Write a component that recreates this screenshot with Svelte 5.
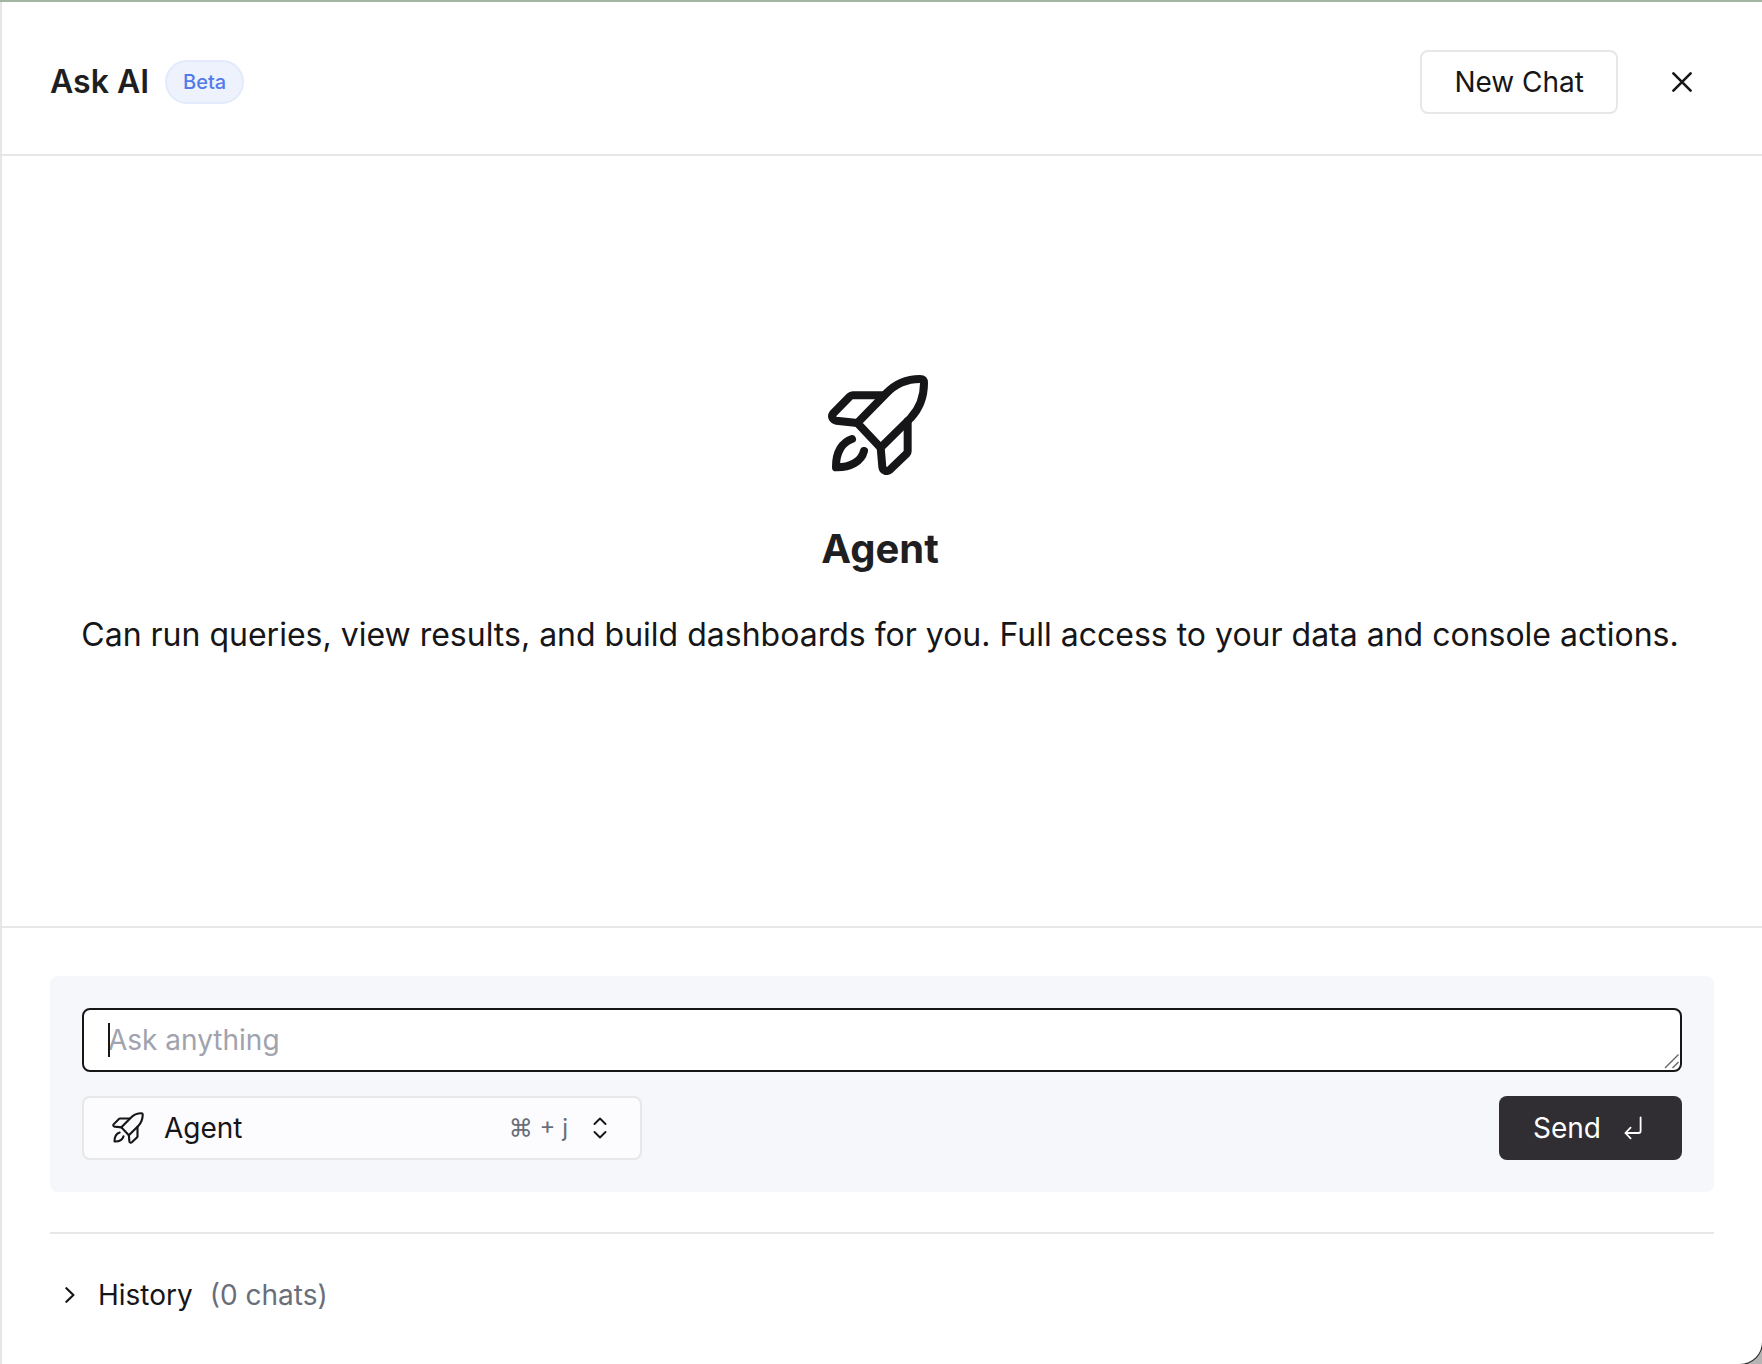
<script>
  let mode = $state('agent');
  let question = $state('');
</script>

{#snippet rocket(weight)}
  <svg class="rocket" viewBox="84 74 300 300" fill="none" stroke="currentColor" stroke-width={weight} stroke-linecap="round" stroke-linejoin="round" aria-hidden="true">
    <path d="M172 218 L258 130 C288 98 322 86 360 86 Q372 86 372 98 C372 140 358 175 332 203 L242 292 Z" />
    <path d="M248 135 H158 Q153 135 149 139 L99 190 Q94 197 98 204 Q102 210 109 211 L172 218" />
    <path d="M323 213 V303 Q323 307 320 310 L270 358 Q263 364 255 361 Q248 358 247 350 L242 292" />
    <path d="M156 266 C128 275 107 304 108 351 C150 352 184 334 192 302" />
  </svg>
{/snippet}

<main class="panel">
  <header class="header">
    <h1>Ask AI</h1>
    <span class="badge">Beta</span>
    <button class="new-chat" type="button">New Chat</button>
    <button class="close" type="button" aria-label="Close">
      <svg viewBox="0 0 20 20" fill="none" stroke="currentColor" stroke-width="2.6" stroke-linecap="round" aria-hidden="true">
        <path d="M1.4 1.4 L18.6 18.6 M18.6 1.4 L1.4 18.6" />
      </svg>
    </button>
  </header>

  <section class="intro">
    {@render rocket(24)}
    <h2>Agent</h2>
    <p>Can run queries, view results, and build dashboards for you. Full access to your data and console actions.</p>
  </section>

  <footer class="footer">
    <form class="composer" onsubmit={(event) => event.preventDefault()}>
      <div class="prompt">
        <textarea rows="1" placeholder="Ask anything" aria-label="Ask anything" bind:value={question}></textarea>
        {#if !question}<span class="caret"></span>{/if}
        <svg class="grip" viewBox="0 0 16 16" fill="none" stroke="#666" stroke-width="1.4" aria-hidden="true">
          <path d="M1 15 L14.5 1.5 M8.5 15 L14.5 9" />
        </svg>
      </div>
      <div class="actions">
        <div class="mode">
          <select aria-label="Mode" bind:value={mode}>
            <option value="agent">Agent</option>
          </select>
          <div class="mode-face">
            {@render rocket(20)}
            <span class="shortcut">⌘ + j</span>
            <svg class="chevrons" viewBox="0 0 14 22" fill="none" stroke="currentColor" stroke-width="1.9" stroke-linecap="round" stroke-linejoin="round" aria-hidden="true">
              <path d="M1.5 7 L7 1.5 L12.5 7 M1.5 15 L7 20.5 L12.5 15" />
            </svg>
          </div>
        </div>
        <button class="send" type="submit">
          Send
          <svg viewBox="0 0 18 24" fill="none" stroke="currentColor" stroke-width="1.8" stroke-linecap="round" stroke-linejoin="round" aria-hidden="true">
            <path d="M16.6 1.5 V15 Q16.6 17 14.6 17 H1.4 M6.6 11.6 L1.4 17 L6.6 22.4" />
          </svg>
        </button>
      </div>
    </form>

    <button class="history" type="button" aria-expanded="false">
      <svg viewBox="0 0 10 16" fill="none" stroke="currentColor" stroke-width="2.2" stroke-linecap="round" stroke-linejoin="round" aria-hidden="true">
        <path d="M1.4 1.2 L8.4 8 L1.4 14.8" />
      </svg>
      <span>History</span>
      <span class="count">(0 chats)</span>
    </button>
  </footer>
</main>

<style>
  :global(body) {
    background: linear-gradient(#ffffff 50%, #b4b4b4 50%);
  }

  * {
    box-sizing: border-box;
  }

  .panel {
    display: flex;
    flex-direction: column;
    min-height: 100vh;
    background: #ffffff;
    border-top: 2px solid #a2b5a0;
    border-bottom-right-radius: 22px;
    box-shadow: inset 2px 0 #e6e6e8, 0 0 0 1px #222222;
    padding-left: 2px;
    font-family: Inter, "Liberation Sans", sans-serif;
    font-size: 28px;
    line-height: 42px;
    color: #161517;
  }

  h1,
  h2,
  p {
    margin: 0;
  }

  button,
  select,
  textarea {
    font: inherit;
    color: inherit;
    margin: 0;
  }

  .header {
    display: flex;
    align-items: center;
    padding: 48px 48px 40px;
    border-bottom: 2px solid #e6e7e9;
  }

  h1 {
    font-size: 32px;
    font-weight: 600;
    line-height: 48px;
    color: #1f1f21;
  }

  .badge {
    margin-left: 16px;
    padding: 4px 16px;
    border: 2px solid #e2eafb;
    border-radius: 22px;
    background: #edf2fd;
    font-size: 20px;
    font-weight: 500;
    line-height: 32px;
    color: #527be8;
  }

  .new-chat {
    height: 64px;
    margin-left: auto;
    padding: 0 32px;
    border: 2px solid #e6e7e9;
    border-radius: 8px;
    background: #ffffff;
  }

  .close {
    display: grid;
    place-items: center;
    width: 64px;
    height: 64px;
    margin-left: 32px;
    padding: 0;
    border: 0;
    background: none;
  }

  .close svg {
    width: 20px;
    height: 20px;
  }

  .intro {
    flex: 1;
    display: flex;
    flex-direction: column;
    align-items: center;
    justify-content: center;
    padding: 0 36px 48px 32px;
    text-align: center;
  }

  .intro .rocket {
    width: 100px;
    height: 100px;
    margin-right: 4px;
  }

  h2 {
    margin: 44px 0 32px;
    font-size: 40px;
    font-weight: 700;
    line-height: 60px;
    color: #1f1f21;
  }

  .intro p {
    font-size: 32px;
    line-height: 48px;
  }

  .footer {
    padding: 48px;
    border-top: 2px solid #e6e7e9;
  }

  .composer {
    display: flex;
    flex-direction: column;
    gap: 24px;
    padding: 32px;
    border-radius: 8px;
    background: #f6f7fb;
  }

  .prompt {
    position: relative;
    display: flex;
  }

  textarea {
    flex: 1;
    height: 64px;
    padding: 9px 24px;
    border: 2px solid #161517;
    border-radius: 8px;
    outline: none;
    background: #ffffff;
    resize: none;
    overflow: hidden;
  }

  textarea::placeholder {
    color: #a0a3ad;
    opacity: 1;
  }

  .caret {
    position: absolute;
    top: 15px;
    left: 26px;
    width: 2px;
    height: 34px;
    background: #161517;
  }

  .grip {
    position: absolute;
    right: 2px;
    bottom: 3px;
    width: 16px;
    height: 16px;
  }

  .actions {
    display: flex;
    justify-content: space-between;
  }

  .mode {
    position: relative;
    width: 560px;
  }

  select {
    appearance: none;
    width: 100%;
    height: 64px;
    padding: 0 200px 0 80px;
    border: 2px solid #e6e7e9;
    border-radius: 8px;
    background: #fcfcfe;
  }

  .mode-face {
    position: absolute;
    inset: 0;
    display: flex;
    align-items: center;
    padding: 0 35px 0 30px;
    pointer-events: none;
  }

  .mode-face .rocket {
    width: 32px;
    height: 32px;
  }

  .shortcut {
    margin-left: auto;
    font-size: 24px;
    color: #696e79;
  }

  .chevrons {
    width: 14px;
    height: 22px;
    margin-left: 25px;
  }

  .send {
    display: flex;
    align-items: center;
    gap: 23px;
    height: 64px;
    padding: 0 40px 0 34px;
    border: 0;
    border-radius: 8px;
    background: #302e32;
    color: #ffffff;
  }

  .send svg {
    width: 18px;
    height: 24px;
  }

  .history {
    display: flex;
    align-items: center;
    width: 100%;
    margin-top: 40px;
    padding: 40px 15px 0;
    border: 0;
    border-top: 2px solid #e6e7e9;
    background: none;
    text-align: left;
  }

  .history svg {
    width: 10px;
    height: 16px;
    margin-right: 23px;
  }

  .count {
    margin-left: 17px;
    color: #696e79;
  }
</style>
